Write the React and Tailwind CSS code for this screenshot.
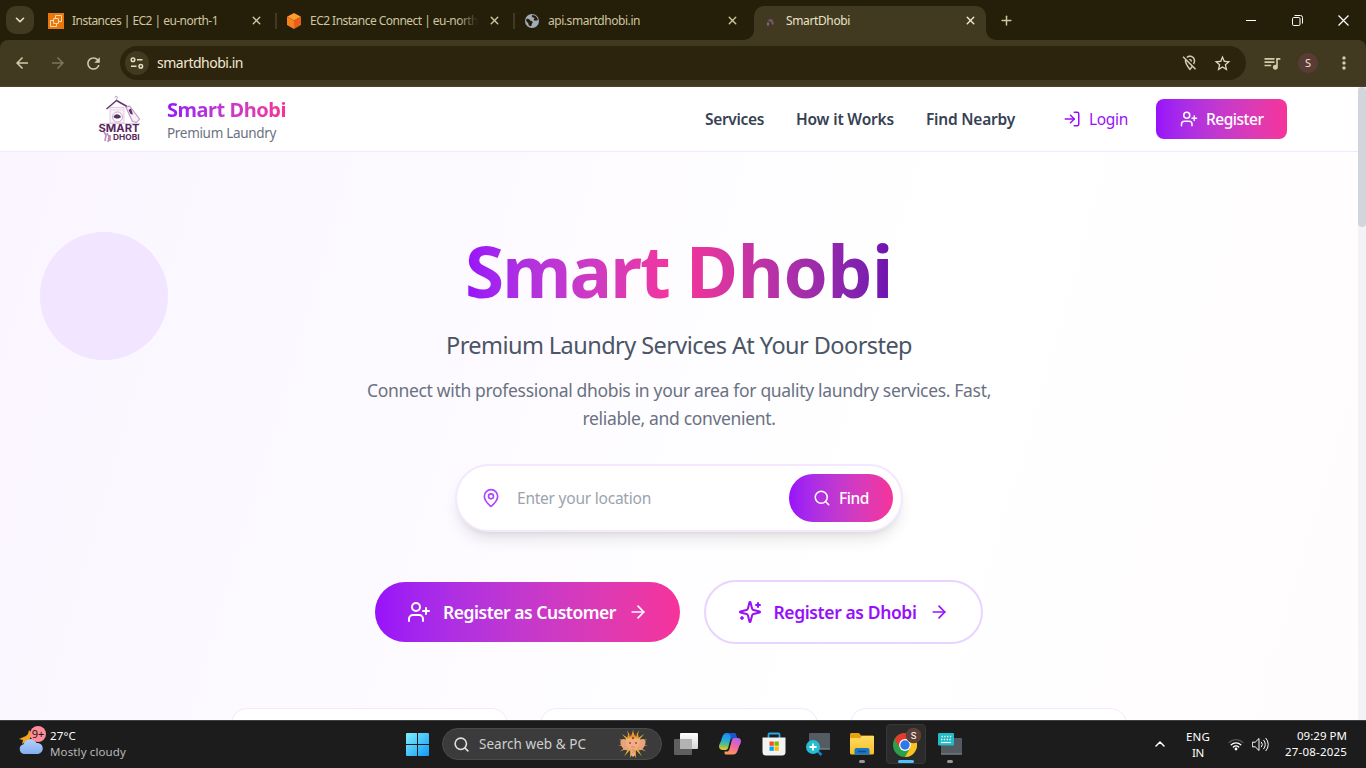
import { useLayoutEffect, useRef } from "react";
import { LogIn, UserPlus, MapPin, Search, ArrowRight, X, Plus, ChevronUp, ChevronDown } from "lucide-react";
import { MdArrowBack, MdArrowForward, MdRefresh, MdStarBorder, MdQueueMusic, MdMoreVert, MdOutlineLocationOff } from "react-icons/md";

// Text run whose letter spacing is adjusted so that it fills a fixed width.
function Fit({ w, className = "", children }) {
  const run = useRef(null);
  useLayoutEffect(() => {
    run.current.style.letterSpacing = "0px";
    const natural = run.current.getBoundingClientRect().width;
    run.current.style.letterSpacing = (w - natural) / children.length + "px";
  }, [w, children]);
  return (
    <span className={"block shrink-0 whitespace-nowrap " + className} style={{ width: w }}>
      <span ref={run}>{children}</span>
    </span>
  );
}

function Ec2Icon() {
  return (
    <svg width="16" height="16" viewBox="0 0 16 16" fill="none">
      <rect width="16" height="16" fill="#e8770c" />
      <g stroke="#fbd9b0" strokeWidth="1">
        <path d="M5 7.500H2.500v6h6V11" />
        <rect x="5.500" y="5.500" width="5" height="5" rx=".5" />
        <path d="M7.500 5V2.500h6v6H11" />
      </g>
    </svg>
  );
}

function CubeIcon() {
  return (
    <svg width="16" height="16" viewBox="0 0 16 16">
      <path d="M8 0l7 3.700L8 7.500 1 3.700z" fill="#ff9a2e" />
      <path d="M1 3.700l7 3.800V16l-7-4z" fill="#f5821f" />
      <path d="M15 3.700L8 7.500V16l7-4z" fill="#e85f1c" />
    </svg>
  );
}

function GlobeIcon() {
  return (
    <svg width="16" height="16" viewBox="0 0 16 16">
      <circle cx="8" cy="8" r="7" fill="#a3abb5" />
      <path d="M2.500 6c1.500-.8 3 .2 3.600 1.300S8 7.600 8.600 8.800 7.500 10.600 7.600 12s-1.500 1.500-2.400.6-.4-2-1.400-2.900S1.500 7.600 2.500 6zM8.800 2c-1.800.8-.8 2.200.4 2.400s1.700 1 .8 1.800.4 1.600 1.500 1.400 2-.1 2.400-.9c-.4-2.600-2.600-4.600-5.100-4.700z" fill="#251f0a" />
    </svg>
  );
}

function Tab({ icon, title, w, fade, separator }) {
  return (
    <div className="flex h-full w-[238px] shrink-0 items-center pl-2 pt-px">
      {icon}
      <div className="relative ml-2 w-[168px]">
        <Fit w={w} className="text-[12px] leading-5 text-[#cfc5a0]">{title}</Fit>
        {fade && <div className="absolute inset-y-0 right-0 w-5 bg-gradient-to-r from-[#251f0a00] to-[#251f0a]" />}
      </div>
      <X size={13} strokeWidth={2.6} className="ml-[9.500px] text-[#cfc5a0]" />
      {separator && <div className="ml-[12px] h-4 w-[2px] bg-[#423a20]" />}
    </div>
  );
}

function TabStrip() {
  return (
    <div className="flex h-10 shrink-0 items-center bg-[#251f0a]">
      <div className="ml-1.5 mr-1.5 flex h-7 w-7 items-center justify-center rounded-[10px] bg-[#423a20]">
        <ChevronDown size={14} strokeWidth={2.8} className="text-[#e8e0c4]" />
      </div>
      <Tab icon={<Ec2Icon />} title="Instances | EC2 | eu-north-1" w={146} separator />
      <Tab icon={<CubeIcon />} title="EC2 Instance Connect | eu-north" w={168} fade separator />
      <Tab icon={<GlobeIcon />} title="api.smartdhobi.in" w={92} />
      <div className="relative flex h-[34px] w-[232px] items-center self-end rounded-t-[10px] bg-[#423a20] pb-[5px] pl-2">
        <svg className="absolute -left-[10px] bottom-0" width="10" height="10" viewBox="0 0 10 10">
          <path d="M10 0v10H0A10 10 0 0 0 10 0z" fill="#423a20" />
        </svg>
        <svg className="absolute -right-[10px] bottom-0" width="10" height="10" viewBox="0 0 10 10">
          <path d="M0 0v10h10A10 10 0 0 1 0 0z" fill="#423a20" />
        </svg>
        <svg width="16" height="16" viewBox="0 0 16 16">
          <path d="M6 7.500c1-2 4-2 5 0l1 4H9.500V9.500L7.500 8.500z" fill="#75536b" />
          <path d="M5 9.500h2v3H5z" fill="#8a6282" />
        </svg>
        <Fit w={64} className="ml-2 text-[12px] leading-5 text-[#e9e1c8]">SmartDhobi</Fit>
        <X size={13} strokeWidth={2.6} className="ml-[113.500px] text-[#eee8d5]" />
      </div>
      <Plus size={15} strokeWidth={2.4} className="ml-[12.500px] text-[#cfc5a0]" />
      <div className="ml-auto flex items-center text-white">
        <div className="flex w-[46px] justify-center"><div className="h-px w-2.5 bg-white" /></div>
        <div className="flex w-[46px] justify-center">
          <svg width="11" height="11" viewBox="0 0 11 11" fill="none" stroke="#fff">
            <rect x=".5" y="2.500" width="7.500" height="8" rx="1.200" />
            <path d="M2.500 .5H8.500a2 2 0 0 1 2 2v6" />
          </svg>
        </div>
        <div className="flex w-[46px] justify-center">
          <svg width="11" height="11" viewBox="0 0 11 11" stroke="#fff" strokeWidth="1.200"><path d="M.5 .5l10 10M10.500 .5l-10 10" /></svg>
        </div>
      </div>
    </div>
  );
}

function Toolbar() {
  return (
    <div className="shrink-0 bg-[#251f0a]">
      <div className="flex h-[47px] items-center rounded-t-lg border-b border-[#4c442c] bg-[#423a20] text-[#d4cba8]">
        <MdArrowBack size={18} className="ml-[13px]" />
        <MdArrowForward size={18} className="ml-[18px] text-[#7e7657]" />
        <MdRefresh size={19} className="ml-[17px]" />
        <div className="ml-[17px] flex h-[34px] w-[1126px] items-center rounded-full bg-[#2d240e]">
          <div className="ml-[5px] flex h-6 w-6 items-center justify-center rounded-full bg-[#423a20]">
            <svg width="14" height="12" viewBox="0 0 14 12" fill="none" stroke="#e6dec3" strokeWidth="1.500">
              <circle cx="3" cy="2.700" r="1.800" /><path d="M7 2.700h5.500M1 9.300h5.500" /><circle cx="10.800" cy="9.300" r="1.800" />
            </svg>
          </div>
          <Fit w={86} className="ml-2 text-[14px] leading-5 text-[#f0e8d2]">smartdhobi.in</Fit>
          <MdOutlineLocationOff size={18} className="ml-auto mr-[14px] text-[#d4ccb5]" />
          <MdStarBorder size={19} className="mr-[14px] text-[#e0d8bf]" />
        </div>
        <MdQueueMusic size={20} className="ml-[16px]" />
        <div className="ml-[16px] flex h-5 w-5 items-center justify-center rounded-full bg-[#593c36] text-[11px] text-[#f0e4dc]">S</div>
        <MdMoreVert size={20} className="ml-[16px]" />
      </div>
    </div>
  );
}

function Logo() {
  return (
    <svg width="48" height="48" viewBox="0 0 48 48" fill="none">
      <path d="M20 2.500c.4-2 2.800-1.200 2.200.5-.3 1-1.100 1.200-1 3" stroke="#9b85a0" strokeWidth=".9" />
      <path d="M21.500 5.500L11.500 14M21.500 5.500l10.500 6" stroke="#64356e" strokeWidth="1.500" />
      <rect x="15" y="12.500" width="14" height="15.500" fill="#faf1fa" stroke="#dcc3df" strokeWidth=".8" />
      <path d="M15 15h14" stroke="#e6d2e8" strokeWidth=".8" />
      <circle cx="22.500" cy="22" r="5" fill="#fff" stroke="#cbaace" />
      <path d="M18.500 22c1-3.500 6-3.700 7.500 0-2 2-5.500 2-7.500 0z" fill="#583060" />
      <path d="M31 12.500l3.500-1.500 10 13-3 3.500-4-1z" fill="#f7eef7" stroke="#bd97c3" strokeWidth="1.100" />
      <path d="M33.500 15l2.500-1.500 2 6-2.500-.5z" fill="#583060" />
      <path d="M5 28.500h40" stroke="#dbc3df" strokeWidth=".8" />
      <text x="3.500" y="37" fill="#58265f" fontSize="10" fontWeight="700" fontFamily="Inter, sans-serif" textLength="41" lengthAdjust="spacingAndGlyphs">SMART</text>
      <path d="M9 37l2 3-1 6M12 38l2 4-1 5M15 40v6" stroke="#bc8ac1" strokeWidth="1.600" />
      <path d="M15 40.500v2" stroke="#e18a3a" />
      <text x="18" y="45" fill="#58265f" fontSize="7.500" fontWeight="700" fontFamily="Inter, sans-serif" textLength="26.500" lengthAdjust="spacingAndGlyphs">DHOBI</text>
    </svg>
  );
}

function Header() {
  return (
    <header className="flex h-[65px] shrink-0 items-center border-b border-purple-100 bg-white pl-[95px] pr-[71px] text-[15.500px]">
      <Logo />
      <div className="ml-6">
        <Fit w={119} className="bg-gradient-to-r from-[#9810fa] to-[#f6339a] bg-clip-text text-[20px] font-bold leading-7 text-transparent">Smart Dhobi</Fit>
        <Fit w={109} className="-mt-px text-[13.500px] leading-5 text-[#6a7282]">Premium Laundry</Fit>
      </div>
      <nav className="ml-auto flex gap-8 pt-0.5 font-semibold text-[#364153]">
        <Fit w={59}>Services</Fit>
        <Fit w={98}>How it Works</Fit>
        <Fit w={89}>Find Nearby</Fit>
      </nav>
      <div className="ml-[48px] flex items-center gap-2 text-[#9810fa]">
        <LogIn size={18} />
        <Fit w={39} className="pt-0.5">Login</Fit>
      </div>
      <div className="ml-7 flex h-10 w-[131px] items-center gap-2 rounded-lg bg-gradient-to-r from-[#9810fa] to-[#f6339a] pl-6 text-white">
        <UserPlus size={18} />
        <Fit w={57.5} className="pt-0.5 font-medium">Register</Fit>
      </div>
    </header>
  );
}

function SparklesIcon() {
  return (
    <svg width="24" height="24" viewBox="0 0 24 24" fill="none" stroke="currentColor" strokeWidth="2" strokeLinecap="round" strokeLinejoin="round">
      <path d="M9.937 15.500A2 2 0 0 0 8.500 14.063l-6.135-1.582a.5.5 0 0 1 0-.962L8.500 9.936A2 2 0 0 0 9.937 8.500l1.582-6.135a.5.5 0 0 1 .963 0L14.063 8.500A2 2 0 0 0 15.500 9.937l6.135 1.581a.5.5 0 0 1 0 .964L15.500 14.063a2 2 0 0 0-1.437 1.437l-1.582 6.135a.5.5 0 0 1-.963 0z" />
      <path d="M20 3v4M22 5h-4M4 17v2M5 18H3" />
    </svg>
  );
}

function Hero() {
  return (
    <section className="relative flex flex-1 flex-col items-center overflow-hidden bg-[linear-gradient(106deg,#faf5ff_0%,#ffffff_65%,#fffcfd_100%)]">
      <div className="absolute left-10 top-20 h-32 w-32 rounded-full bg-[#f1e5ff]" />
      <h1 className="mt-[74px] flex w-[428px] shrink-0 justify-between bg-gradient-to-r from-[#9810fa] via-[#f6339a] to-[#6e11b0] bg-clip-text text-[71px] font-bold leading-[90px] text-transparent">
        <Fit w={204}>Smart</Fit>
        <Fit w={207}>Dhobi</Fit>
      </h1>
      <Fit w={466} className="mt-[13px] text-[23.500px] leading-8 text-[#4a5565]">Premium Laundry Services At Your Doorstep</Fit>
      <div className="mt-[15px] flex flex-col items-center text-[17.500px] leading-7 text-[#6a7282]">
        <Fit w={624}>Connect with professional dhobis in your area for quality laundry services. Fast,</Fit>
        <Fit w={193}>reliable, and convenient.</Fit>
      </div>
      <div className="mt-[32px] flex h-[68px] w-[448px] shrink-0 items-center rounded-full border-2 border-purple-100 bg-white pl-6 pr-2 shadow-lg">
        <MapPin size={20} className="text-[#ad46ff]" />
        <Fit w={134} className="ml-4 pt-0.5 text-[15.500px] text-[#9ca3af]">Enter your location</Fit>
        <div className="ml-auto flex h-12 w-[104px] items-center gap-2 rounded-full bg-gradient-to-r from-[#9810fa] to-[#f6339a] pl-6 text-[15.500px] font-medium text-white">
          <Search size={18} />
          <Fit w={30} className="pt-0.5">Find</Fit>
        </div>
      </div>
      <div className="mt-12 flex shrink-0 items-center gap-6 text-[17.500px] font-semibold">
        <div className="flex h-[60px] w-[305px] items-center rounded-full bg-gradient-to-r from-[#9810fa] to-[#f6339a] pl-8 text-white">
          <UserPlus size={24} />
          <Fit w={173} className="ml-3 pt-px">Register as Customer</Fit>
          <ArrowRight size={20} className="ml-3" />
        </div>
        <div className="flex h-16 w-[279px] items-center rounded-full border-2 border-[#e9d4ff] bg-white pl-8 text-[#9810fa]">
          <SparklesIcon />
          <Fit w={143} className="ml-[11.500px] pt-px">Register as Dhobi</Fit>
          <ArrowRight size={20} className="ml-3" />
        </div>
      </div>
      <div className="mt-16 grid w-[896px] shrink-0 grid-cols-3 gap-8">
        <div className="h-40 rounded-2xl border border-purple-100 bg-white" />
        <div className="h-40 rounded-2xl border border-purple-100 bg-white" />
        <div className="h-40 rounded-2xl border border-purple-100 bg-white" />
      </div>
    </section>
  );
}

function Weather() {
  return (
    <svg width="30" height="30" viewBox="0 0 30 30">
      <defs>
        <linearGradient id="cloud" x1="0" y1="0" x2="0" y2="1"><stop stopColor="#b4d2fb" /><stop offset="1" stopColor="#83aef0" /></linearGradient>
      </defs>
      <path d="M11 4l3 5-3 5-7 4 1-4-4-1 7-3 2-2z" fill="#f5a51c" />
      <path d="M6 28a5 5 0 0 1-.5-9.800A7 7 0 0 1 18.500 17a5.500 5.500 0 0 1 1.500 11z" fill="url(#cloud)" />
      <circle cx="20" cy="8" r="8" fill="#ff8d97" />
      <text x="20" y="12" textAnchor="middle" fontSize="11" fill="#241416" fontFamily="'Noto Sans', sans-serif" textLength="12.500">9+</text>
    </svg>
  );
}

function Ganesha() {
  const rays = [0, 24, 48, 72, 96, 120, 144, 168, 192, 216, 240, 264, 288, 312, 336];
  return (
    <svg width="32" height="28" viewBox="0 0 32 28">
      {rays.map((a) => (
        <path key={a} d="M14 14l2-15 2 15z" fill="#eab52e" transform={`rotate(${a} 16 14)`} />
      ))}
      <path d="M10 10C3 7 2 12 5 17s6 3 7 2zM22 10c7-3 8 2 5 7s-6 3-7 2z" fill="#e9a27b" />
      <path d="M9 9c3-3 11-3 14 0 1 5-2 9-4 10l-1 6c-1 2-3 2-4 0l-1-6c-3-2-5-6-4-10z" fill="#f2ad83" />
      <path d="M10 9l1-5 3 2 2-4 2 4 3-2 1 5c-4-2-8-2-12 0z" fill="#dda128" />
      <circle cx="13" cy="5.500" r="1" fill="#d12b2b" /><circle cx="19" cy="5.500" r="1" fill="#d12b2b" /><circle cx="16" cy="8" r="1.200" fill="#c8382a" />
      <path d="M12 13h2M18 13h2" stroke="#59301f" />
      <path d="M14 17h4M14.500 20h3M15 23l3-2" stroke="#c77a55" strokeWidth=".7" />
    </svg>
  );
}

function TaskView() {
  return (
    <svg width="24" height="24" viewBox="0 0 24 24">
      <defs><linearGradient id="tv" x1="0" y1="0" x2="0" y2="1"><stop stopColor="#fff" /><stop offset="1" stopColor="#d5d5d5" /></linearGradient></defs>
      <rect x="0" y="7" width="18" height="16" rx="1" fill="#5f5f5f" />
      <rect x="6" y="1" width="18" height="16" rx="1" fill="url(#tv)" />
      <rect x="6" y="7" width="12" height="10" fill="#b3b3b3" />
    </svg>
  );
}

function Copilot() {
  return (
    <svg width="24" height="24" viewBox="0 0 24 24" fill="none">
      <defs>
        <linearGradient id="cp1" x1="6" y1="1" x2="4" y2="18" gradientUnits="userSpaceOnUse"><stop stopColor="#1b8bea" /><stop offset=".4" stopColor="#24a9e0" /><stop offset=".7" stopColor="#67c06a" /><stop offset="1" stopColor="#f0cb2c" /></linearGradient>
        <linearGradient id="cp2" x1="20" y1="6" x2="12" y2="23" gradientUnits="userSpaceOnUse"><stop stopColor="#b05ff2" /><stop offset=".5" stopColor="#f0699d" /><stop offset="1" stopColor="#ff9a50" /></linearGradient>
      </defs>
      <path d="M16.500 1H8.500C5.500 1 4.500 4 3.500 7.500S1 12 1 14.500 3 18 5 18h2.500c2 0 2.500-1.500 3-3.500l2-7.500c.5-2 1.500-2.500 3-2.500h2C17.500 2.500 17.500 1 16.500 1z" fill="url(#cp1)" />
      <path d="M8.500 1h8c1.500 0 1.800 2.500 3 5.500h-4c-1.500 0-2.500.5-3 2.500C13 5 13 1.500 8.500 1z" fill="#1b55c8" />
      <path d="M7.500 22.500h8c3 0 4-3 5-6.500s2.500-4.500 2.500-7S21 6 19 6h-2.500c-2 0-2.500 1.500-3 3.500L11.500 17c-.5 2-1.500 2.500-3 2.500h-2c0 1 .2 3 1 3z" fill="url(#cp2)" />
    </svg>
  );
}

function Store() {
  return (
    <svg width="24" height="24" viewBox="0 0 24 24">
      <path d="M6.500 6V2.500C6.500 2 7 1.500 7.500 1.500h9c.5 0 1 .5 1 1V6" fill="none" stroke="#23a8e8" strokeWidth="1.800" />
      <path d="M.5 5.500h23V20a3.500 3.500 0 0 1-3.500 3.500H4A3.500 3.500 0 0 1 .5 20z" fill="#f3f3f3" />
      <rect x="7.500" y="9.500" width="4.300" height="4.300" fill="#f25022" /><rect x="12.500" y="9.500" width="4.300" height="4.300" fill="#7fba00" />
      <rect x="7.500" y="14.500" width="4.300" height="4.300" fill="#00a4ef" /><rect x="12.500" y="14.500" width="4.300" height="4.300" fill="#ffb900" />
    </svg>
  );
}

function Magnifier() {
  return (
    <svg width="24" height="24" viewBox="0 0 24 24">
      <rect x="3" y="1" width="21" height="16.500" rx="1" fill="#555b63" />
      <path d="M3 16.500h21v1H3z" fill="#8b9097" />
      <path d="M11.500 19l4 4" stroke="#1683cf" strokeWidth="2.500" />
      <circle cx="7" cy="15" r="7" fill="#26bdd0" />
      <path d="M7 11.500v7M3.500 15h7" stroke="#fff" strokeWidth="1.800" />
    </svg>
  );
}

function Folder() {
  return (
    <svg width="24" height="24" viewBox="0 0 24 24">
      <defs><linearGradient id="fd" x1="0" y1="0" x2="0" y2="1"><stop stopColor="#ffdc62" /><stop offset="1" stopColor="#f8bd27" /></linearGradient></defs>
      <path d="M0 2.500C0 1.500.7 1 1.500 1H9l2 2.500h11.500c1 0 1.500.5 1.500 1.500v4H0z" fill="#e6a30c" />
      <path d="M0 6h10l2-2h12v17a1.500 1.500 0 0 1-1.500 1.500h-21A1.500 1.500 0 0 1 0 21z" fill="url(#fd)" />
      <path d="M4.500 22.500V18a2 2 0 0 1 2-2h11a2 2 0 0 1 2 2v4.500z" fill="#1878c4" />
      <path d="M8 19.500h8" stroke="#0d4f91" strokeWidth="1.500" />
    </svg>
  );
}

function Chrome() {
  return (
    <svg width="30" height="30" viewBox="0 0 30 30">
      <g transform="translate(2 6)">
        <circle cx="12" cy="12" r="12" fill="#2b9f4b" />
        <path d="M12 6h10.400A12 12 0 0 1 12 24l5.200-9z" fill="#fcc31e" />
        <path d="M1.600 6A12 12 0 0 1 22.400 6H12L6.800 15z" fill="#e33b2e" />
        <circle cx="12" cy="12" r="5.900" fill="#fff" />
        <circle cx="12" cy="12" r="4.700" fill="#2e78ec" />
      </g>
      <circle cx="22.500" cy="8.500" r="7.800" fill="#5d4037" />
      <text x="22.500" y="12" textAnchor="middle" fill="#fff" fontSize="9.500" fontFamily="Roboto, sans-serif">S</text>
    </svg>
  );
}

function RemoteKeyboard() {
  return (
    <svg width="24" height="24" viewBox="0 0 24 24">
      <rect x="3" y="6" width="21" height="16.500" rx="1" fill="#545a62" />
      <path d="M3 21.500h21v1H3z" fill="#858b93" />
      <rect x="0" y="1" width="16" height="12.500" rx="1" fill="#21bac7" />
      <path d="M3.500 4.500h10M3 7.500h10" stroke="#fff" strokeWidth="1.300" strokeDasharray="1.300 1.500" /><path d="M3 10.500h10" stroke="#fff" strokeWidth="1.200" />
    </svg>
  );
}

function TaskItem({ children, active, running }) {
  return (
    <div className="flex w-11 shrink-0 justify-center">
      <div className={"relative flex h-10 w-10 items-center justify-center rounded " + (active ? "border border-[#373737] bg-[#2b2b2b]" : "")}>
        {children}
        {running && <div className="absolute bottom-px h-[3px] w-1.5 rounded-full bg-[#989898]" />}
        {active && <div className="absolute bottom-0 h-[3px] w-4 rounded-full bg-[#4cc2ff]" />}
      </div>
    </div>
  );
}

function Taskbar() {
  return (
    <div className="flex h-12 shrink-0 items-center border-t border-[#3d3f40] bg-[#1c1c1c] pb-px text-[11.500px] leading-4 text-white">
      <div className="flex w-[406px] shrink-0 items-center pl-[18px]">
        <div className="mb-[7px]"><Weather /></div>
        <div className="ml-0.5">
          <Fit w={26}>27°C</Fit>
          <Fit w={76} className="text-[#b9b9b9]">Mostly cloudy</Fit>
        </div>
      </div>
      <svg width="23" height="23" viewBox="0 0 23 23">
        <defs><linearGradient id="win" x1="0" y1="0" x2="23" y2="23" gradientUnits="userSpaceOnUse"><stop stopColor="#7ff0fd" /><stop offset="1" stopColor="#1199f5" /></linearGradient></defs>
        <path d="M1 0h10v11H0V1a1 1 0 0 1 1-1zM12 0h10a1 1 0 0 1 1 1v10H12zM0 12h11v11H1a1 1 0 0 1-1-1zM12 12h11v10a1 1 0 0 1-1 1H12z" fill="url(#win)" />
      </svg>
      <div className="ml-[13px] flex h-8 w-[220px] shrink-0 items-center rounded-full border border-[#4b4b4b] bg-[#3b3b3b] pl-[10px]">
        <Search size={17} strokeWidth={2.3} className="text-[#e0e0e0]" />
        <Fit w={107} className="ml-[9px] text-[13.500px] leading-5 text-[#cfcfcf]">Search web & PC</Fit>
        <div className="ml-[31px]"><Ganesha /></div>
      </div>
      <div className="ml-[2px] flex">
        <TaskItem><TaskView /></TaskItem>
        <TaskItem><Copilot /></TaskItem>
        <TaskItem><Store /></TaskItem>
        <TaskItem><Magnifier /></TaskItem>
        <TaskItem running><Folder /></TaskItem>
        <TaskItem active><div className="-mt-1"><Chrome /></div></TaskItem>
        <TaskItem running><RemoteKeyboard /></TaskItem>
      </div>
      <ChevronUp size={16} strokeWidth={2.2} className="ml-auto" />
      <div className="ml-[18px] flex w-6 flex-col items-center pt-px">
        <Fit w={24}>ENG</Fit>
        <Fit w={12}>IN</Fit>
      </div>
      <svg className="ml-[18px]" width="16" height="14" viewBox="0 0 16 14" fill="none" strokeLinecap="round">
        <path d="M1 5.500a10 10 0 0 1 14 0" stroke="#555" strokeWidth="1.300" />
        <path d="M3.200 7.800a6.800 6.800 0 0 1 9.600 0M5.300 10a3.800 3.800 0 0 1 5.400 0" stroke="#fff" strokeWidth="1.300" /><circle cx="8" cy="12" r="1.400" fill="#fff" />
      </svg>
      <svg className="ml-[8px]" width="17" height="15" viewBox="0 0 17 15" fill="none" stroke="#fff" strokeLinecap="round" strokeLinejoin="round">
        <path d="M.7 5.200h2.500L7 1.500v12L3.200 9.800H.7z" /><path d="M9.500 5.200a3.500 3.500 0 0 1 0 4.600M11.700 3.200a6.300 6.300 0 0 1 0 8.600M13.900 1.300a9 9 0 0 1 0 12.400" />
      </svg>
      <div className="ml-[16px] mr-[19px] flex w-[62px] flex-col items-end">
        <Fit w={50}>09:29 PM</Fit>
        <Fit w={62}>27-08-2025</Fit>
      </div>
    </div>
  );
}

export default function App() {
  return (
    <div className="flex h-[768px] w-[1366px] flex-col overflow-hidden bg-white font-['Noto_Sans','Open_Sans',sans-serif]">
      <TabStrip />
      <Toolbar />
      <div className="flex h-[633px] shrink-0">
        <main className="flex w-[1358px] flex-col overflow-hidden">
          <Header />
          <Hero />
        </main>
        <div className="w-2 bg-[#f1f3f6]">
          <div className="h-[140px] rounded-full bg-[#d1d5dc]" />
        </div>
      </div>
      <Taskbar />
    </div>
  );
}
